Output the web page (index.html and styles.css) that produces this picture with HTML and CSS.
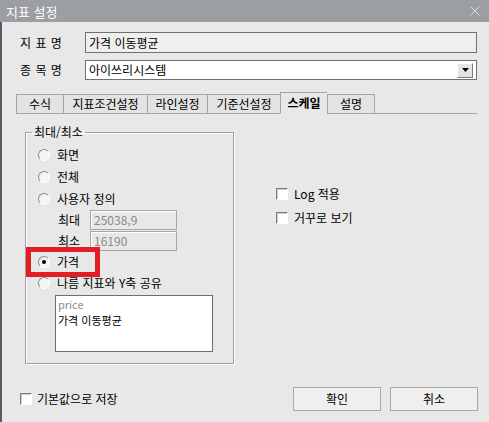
FILE: index.html
```html
<!DOCTYPE html>
<html lang="ko">
<head>
<meta charset="utf-8">
<title>지표 설정</title>
<link rel="stylesheet" href="styles.css">
</head>
<body>
<div class="titlebar">
  <span class="title">지표 설정</span>
  <svg class="close" width="10" height="10" viewBox="0 0 10 10"><path d="M0.5 0.5 L9.5 9.5 M9.5 0.5 L0.5 9.5" stroke="#dcdcdc" stroke-width="1" fill="none"/></svg>
</div>
<div class="client">
  <div class="row r1">
    <span class="label">지 표 명</span>
    <div class="field readonly">가격 이동평균</div>
  </div>
  <div class="row r2">
    <span class="label">종 목 명</span>
    <div class="field combo">
      <span>아이쓰리시스템</span>
      <span class="drop"><svg width="7" height="4" viewBox="0 0 7 4"><path d="M0 0 H7 L3.5 4 Z" fill="#000"/></svg></span>
    </div>
  </div>
  <div class="tabs">
    <div class="tab t1">수식</div>
    <div class="tab t2">지표조건설정</div>
    <div class="tab t3">라인설정</div>
    <div class="tab t4">기준선설정</div>
    <div class="tab t5 active">스케일</div>
    <div class="tab t6 last">설명</div>
    <div class="tabfill"></div>
  </div>
  <div class="panel">
    <fieldset class="group">
      <legend>최대/최소</legend>
      <div class="opts">
        <div class="opt"><span class="radio"></span><span>화면</span></div>
        <div class="opt"><span class="radio"></span><span>전체</span></div>
        <div class="opt"><span class="radio"></span><span>사용자 정의</span></div>
        <div class="mm"><span class="mmlabel">최대</span><span class="mmbox">25038,9</span></div>
        <div class="mm mm2"><span class="mmlabel">최소</span><span class="mmbox">16190</span></div>
        <div class="opt opt-price"><span class="radio checked"></span><span>가격</span><span class="highlight"></span></div>
        <div class="opt opt-share"><span class="radio"></span><span>나름 지표와 Y축 공유</span></div>
        <div class="listbox">
          <div class="li gray">price</div>
          <div class="li">가격 이동평균</div>
        </div>
      </div>
    </fieldset>
    <div class="side">
      <div class="chk"><span class="box"></span><span>Log 적용</span></div>
      <div class="chk"><span class="box"></span><span>거꾸로 보기</span></div>
    </div>
  </div>
  <div class="footer">
    <div class="chk foot-chk"><span class="box"></span><span>기본값으로 저장</span></div>
    <div class="buttons">
      <div class="btn">확인</div>
      <div class="btn">취소</div>
    </div>
  </div>
</div>
</body>
</html>
```

FILE: styles.css
```css
* { box-sizing: border-box; }
html, body { margin: 0; padding: 0; }
body {
  width: 489px;
  height: 422px;
  overflow: hidden;
  background: #e8e8e8;
  font-family: "Noto Sans CJK KR", "Noto Sans", sans-serif;
  font-size: 12px;
  color: #000;
}
.titlebar {
  height: 22px;
  background: #9b9ea3;
  display: flex;
  align-items: center;
  justify-content: space-between;
  padding: 0 9px 0 6px;
}
.title { color: #fff; font-size: 13px; line-height: 1; }
.close { display: block; }

.client {
  height: 400px;
  border-left: 2px solid #565966;
  padding: 0 11px 0 18px;
  display: flex;
  flex-direction: column;
}
.row { display: flex; align-items: center; }
.r1 { margin-top: 10px; height: 21px; }
.r2 { margin-top: 7px; height: 20px; }
.label { width: 65px; word-spacing: 1px; line-height: 1; }
.field {
  width: 392px;
  height: 100%;
  border: 1px solid #707070;
  display: flex;
  align-items: center;
  padding-left: 3px;
  line-height: 1;
}
.readonly { background: #efefef; }
.combo { background: #fff; justify-content: space-between; padding-right: 3px; }
.drop {
  width: 16px;
  height: 15px;
  background: #e4e4e4;
  border: 1px solid;
  border-color: #fff #7d7d7d #7d7d7d #fff;
  display: flex;
  align-items: center;
  justify-content: center;
}
.drop svg { display: block; }

.tabs {
  margin: 12px 1px 0 -4px;
  height: 22px;
  display: flex;
  align-items: flex-end;
}
.tab {
  height: 20px;
  border-top: 1px solid #a4a4a4;
  border-left: 1px solid #a4a4a4;
  border-bottom: 1px solid #a4a4a4;
  background: #e3e3e3;
  display: flex;
  align-items: center;
  justify-content: center;
  line-height: 1;
}
.tab.last { border-right: 1px solid #a4a4a4; }
.t1 { width: 47px; }
.t2 { width: 84px; }
.t3 { width: 60px; }
.t4 { width: 73px; }
.t5 { width: 47px; }
.t6 { width: 48px; }
.tab.active {
  height: 22px;
  background: #e8e8e8;
  border-bottom-color: #e8e8e8;
  font-weight: bold;
  padding-bottom: 1px;
}
.tabfill { flex: 1; border-bottom: 1px solid #a4a4a4; }

.panel { display: flex; margin-top: 10px; margin-left: 5px; }
.group {
  width: 209px;
  margin: 0;
  padding: 0 0 11px 0;
  border: 1px solid #a0a0a0;
  box-shadow: 1px 1px 0 #fff, inset 1px 1px 0 #fff;
  min-width: 0;
}
.group legend {
  margin-left: 6px;
  padding: 0 2px;
  line-height: 16px;
  font-size: 12px;
}
.opts { display: flex; flex-direction: column; margin-top: 4px; }
.opt { display: flex; align-items: center; height: 22px; padding-left: 12px; line-height: 1; }
.radio {
  width: 12px;
  height: 12px;
  border-radius: 50%;
  border: 1px solid;
  border-color: #8c8c8c #fff #fff #8c8c8c;
  background: #f4f4f4;
  margin-right: 7px;
  display: flex;
  align-items: center;
  justify-content: center;
}
.radio.checked::after {
  content: "";
  width: 4px;
  height: 4px;
  border-radius: 50%;
  background: #000;
}
.mm { display: flex; align-items: center; height: 20px; padding-left: 32px; line-height: 1; }
.mm2 { margin-top: 1px; }
.mmlabel { width: 32px; }
.mmbox {
  width: 87px;
  height: 20px;
  border: 1px solid #a6a6a6;
  box-shadow: inset 1px 1px 0 #fff;
  color: #8a8a8a;
  padding: 3px 0 0 3px;
}
.opt-price { height: 21px; position: relative; }
.highlight {
  position: absolute;
  left: 0;
  top: -4px;
  width: 74px;
  height: 30px;
  border: 5px solid #e31d25;
}
.opt-share { height: 22px; }
.listbox {
  margin: 1px 0 0 29px;
  width: 158px;
  height: 57px;
  background: #fff;
  border: 1px solid #6e6e6e;
  padding: 0 2px;
  font-size: 11px;
}
.li { line-height: 16px; height: 16px; }
.li.gray { color: #8a8a8a; }

.side { margin-left: 42px; padding-top: 58px; display: flex; flex-direction: column; }
.chk { display: flex; align-items: center; height: 24px; line-height: 1; }
.box {
  width: 12px;
  height: 12px;
  background: #fff;
  border: 1px solid;
  border-color: #7a7a7a #fff #fff #7a7a7a;
  box-shadow: inset 1px 1px 0 #d0d0d0;
  margin-right: 6px;
}
.foot-chk .box { margin-right: 5px; }

.footer { margin-top: 23px; height: 24px; display: flex; align-items: center; }
.buttons { margin-left: auto; display: flex; gap: 9px; }
.btn {
  width: 88px;
  height: 24px;
  background: #efefef;
  border: 1px solid #a8a8a8;
  display: flex;
  align-items: center;
  justify-content: center;
  line-height: 1;
}
```
